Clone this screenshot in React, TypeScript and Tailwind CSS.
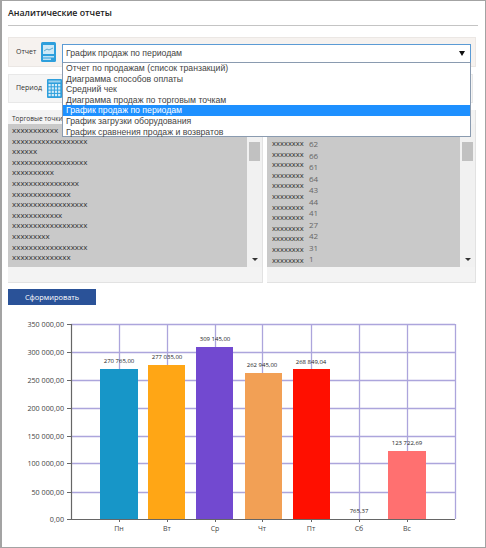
const options = [
  "Отчет по продажам (список транзакций)",
  "Диаграмма способов оплаты",
  "Средний чек",
  "Диаграмма продаж по торговым точкам",
  "График продаж по периодам",
  "График загрузки оборудования",
  "График сравнения продаж и возвратов",
];
const leftRows = [11, 18, 6, 18, 10, 16, 14, 18, 12, 18, 9, 18, 14];
const rightNums = ["62", "66", "61", "64", "43", "44", "41", "27", "42", "31", "1", "5"];
const gridY = [324, 352, 380, 408, 436, 463, 492];
const gridX = [119, 167, 215, 262, 311, 359, 407, 455];
const yLabels = ["350 000,00", "300 000,00", "250 000,00", "200 000,00", "150 000,00", "100 000,00", "50 000,00", "0,00"];
const bars = [
  { x: 100, w: 38, top: 369, c: "#1796c8", label: "270 765,00", ly: 363, cx: 119, d: "Пн" },
  { x: 148, w: 37, top: 365, c: "#ffa615", label: "277 035,00", ly: 359, cx: 167, d: "Вт" },
  { x: 196, w: 37, top: 347, c: "#7249d0", label: "309 145,00", ly: 341, cx: 215, d: "Ср" },
  { x: 245, w: 37, top: 373, c: "#f2a055", label: "262 945,00", ly: 367, cx: 262, d: "Чт" },
  { x: 293, w: 37, top: 369, c: "#ff0f00", label: "268 849,04", ly: 364, cx: 311, d: "Пт" },
  { x: 359, w: 0, top: 519, c: "#ffffff", label: "765,37", ly: 513, cx: 359, d: "Сб" },
  { x: 388, w: 38, top: 451, c: "#ff7070", label: "123 722,69", ly: 445, cx: 407, d: "Вс" },
];

function ReportIcon() {
  return (
    <svg width="15" height="20" viewBox="0 0 15 20" className="shrink-0">
      <rect width="15" height="20" rx="1.5" fill="#2e9fdc" />
      <rect x="2" y="3" width="11" height="9" fill="#cfe9f6" />
      <path d="M3 9 L6 7 L8 8 L12 6" stroke="#5aa9d0" strokeWidth="1" fill="none" />
      <rect x="2" y="14" width="11" height="1.5" fill="#bfe2f4" />
      <rect x="2" y="16.5" width="8" height="1.5" fill="#bfe2f4" />
    </svg>
  );
}

function CalendarIcon() {
  const cells = [];
  for (let r = 0; r < 4; r++) {
    for (let c = 0; c < 4; c++) {
      cells.push(<rect key={`${r}-${c}`} x={1.5 + c * 3.2} y={5 + r * 3.3} width="2.2" height="2.3" fill="#d4edf9" />);
    }
  }
  return (
    <svg width="15" height="19" viewBox="0 0 15 19" className="shrink-0">
      <rect width="15" height="19" rx="1" fill="#2e9fdc" />
      <rect x="1.5" y="1.5" width="12" height="2" fill="#9bd2ee" />
      {cells}
    </svg>
  );
}

function Scrollbar() {
  return (
    <div className="w-[15px] bg-[#f1f1f1] flex flex-col items-center pt-[18px] pb-[6px] justify-between">
      <div className="w-[11px] h-[19px] bg-[#c1c1c1]" />
      <div className="w-0 h-0 border-l-[3px] border-r-[3px] border-t-[3px] border-l-transparent border-r-transparent border-t-[#333333]" />
    </div>
  );
}

export default function App() {
  return (
    <div
      className="w-[486px] h-[548px] overflow-hidden border border-l-2 border-[#a3a3a3] bg-white pl-[6px] pt-[6px] text-[#333333]"
      style={{ fontFamily: '"Open Sans", "DejaVu Sans", sans-serif' }}
    >
      <div className="w-[470px] h-[19px] border-b border-[#c4c4c4] text-[8.8px] leading-[13px] font-semibold text-[#222222]">
        Аналитические отчеты
      </div>

      <div className="relative mt-[11px] w-[468px] h-[30px] flex items-center bg-[#f6f2ef] border border-[#ebe7e4] pl-[7px] text-[7px]">
        <span className="w-[25px]">Отчет</span>
        <ReportIcon />
        <div className="absolute left-[53px] top-[6px] w-[409px] z-10">
          <div
            className="h-[19px] border border-[#5b9bd5] border-b-[#8a9bb0] bg-white flex items-center justify-between pl-[3px] pr-[5px] text-[8.7px] text-[#444444]"
            style={{ fontFamily: '"Liberation Sans", sans-serif' }}
          >
            <span>График продаж по периодам</span>
            <div className="w-0 h-0 border-l-[3px] border-r-[3px] border-t-[5px] border-l-transparent border-r-transparent border-t-[#111111]" />
          </div>
          <div
            className="border border-t-0 border-[#8a9bb0] bg-white h-[74px] text-[8.7px] text-[#444444]"
            style={{ fontFamily: '"Liberation Sans", sans-serif' }}
          >
            {options.map((o, i) => (
              <div key={o} className={`h-[10.6px] leading-[10.6px] pl-[3px] ${i === 4 ? "bg-[#1e90ff] text-white" : ""}`}>
                {o}
              </div>
            ))}
          </div>
        </div>
      </div>

      <div className="mt-[7px] w-[465px] h-[29px] flex items-center bg-[#f5f5f5] border border-[#e8e8e8] pl-[7px] text-[7px]">
        <span className="w-[31px]">Период</span>
        <CalendarIcon />
      </div>

      <div className="mt-[7px] flex gap-[4px] h-[173px]">
        <div className="w-[255px] bg-[#f3f3f3] border-b border-r border-[#e2e2e2] flex flex-col">
          <div className="h-[14px] pl-[4px] text-[6.5px] leading-[18px] text-[#333333]">Торговые точки</div>
          <div className="h-[143px] flex">
            <div className="flex-1 bg-[#c9c9c9] pl-[4px] pt-[1px] text-[8px] leading-[10.6px] text-[#333333] overflow-hidden">
              {leftRows.map((n, i) => (
                <div key={i}>{"x".repeat(n)}</div>
              ))}
            </div>
            <Scrollbar />
          </div>
        </div>
        <div className="w-[209px] bg-[#f3f3f3] border-b border-r border-[#e2e2e2] flex flex-col">
          <div className="h-[14px]" />
          <div className="h-[143px] flex">
            <div className="flex-1 bg-[#c9c9c9] pl-[5px] pt-[14px] overflow-hidden flex gap-[5px]">
              <div className="w-[32px] text-[7.6px] leading-[10.6px] text-[#333333]">
                {rightNums.map((_, i) => (
                  <div key={i}>xxxxxxxx</div>
                ))}
              </div>
              <div className="text-[8px] leading-[11.5px] text-[#666666]">
                {rightNums.map((n) => (
                  <div key={n}>{n}</div>
                ))}
              </div>
            </div>
            <Scrollbar />
          </div>
        </div>
      </div>

      <button className="block mt-[6px] w-[88px] h-[16px] bg-[#2a5298] text-white text-[7.4px] leading-[16px] font-medium text-center">
        Сформировать
      </button>

      <svg className="block mt-[13px]" width="470" height="226" viewBox="8 318 470 226" fontFamily="Open Sans, sans-serif">
        {gridY.map((y) => (
          <line key={y} x1="71" x2="455" y1={y + 0.5} y2={y + 0.5} stroke="#aca5dc" strokeWidth="1.3" />
        ))}
        {gridX.map((x) => (
          <line key={x} x1={x + 0.5} x2={x + 0.5} y1="324" y2="519" stroke="#aca5dc" strokeWidth="1.3" />
        ))}
        {bars.map((b) => (
          <rect key={b.d} x={b.x} y={b.top} width={b.w} height={519 - b.top} fill={b.c} />
        ))}
        <line x1="71.5" x2="71.5" y1="324" y2="520" stroke="#666666" strokeWidth="1.2" />
        <line x1="71" x2="455" y1="519.5" y2="519.5" stroke="#666666" strokeWidth="1.2" />
        {[...gridY, 519].map((y, i) => (
          <g key={y}>
            <line x1="67" x2="71" y1={y + 0.5} y2={y + 0.5} stroke="#666666" />
            <text x="64" y={y + 3} textAnchor="end" fontSize="7.2" fill="#444444">{yLabels[i]}</text>
          </g>
        ))}
        {bars.map((b) => (
          <g key={b.label}>
            <line x1={b.cx + 0.5} x2={b.cx + 0.5} y1="519" y2="522" stroke="#666666" />
            <text x={b.cx} y={b.ly} textAnchor="middle" fontSize="6" fill="#222222">{b.label}</text>
            <text x={b.cx} y="531" textAnchor="middle" fontSize="7" fill="#444444">{b.d}</text>
          </g>
        ))}
      </svg>
    </div>
  );
}
